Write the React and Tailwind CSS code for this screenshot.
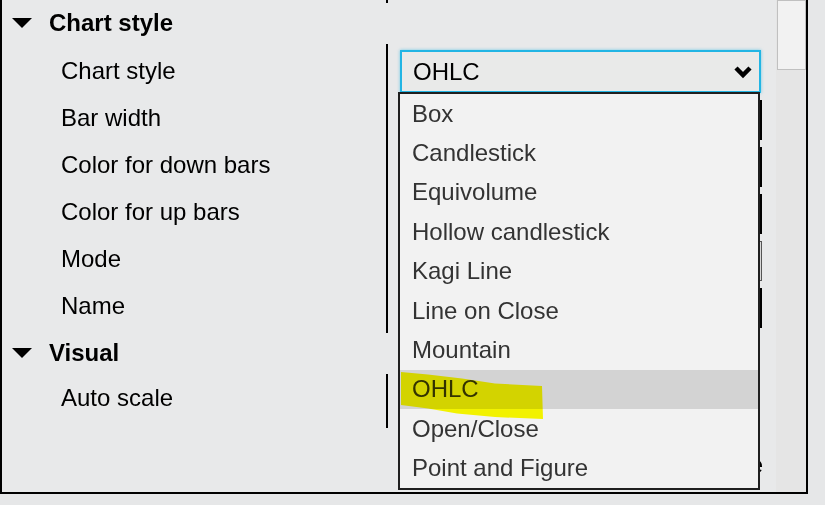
// Property grid with an open "Chart style" drop-down list
const chartRows = ["Chart style", "Bar width", "Color for down bars", "Color for up bars", "Mode", "Name"];

const options = [
  "Box",
  "Candlestick",
  "Equivolume",
  "Hollow candlestick",
  "Kagi Line",
  "Line on Close",
  "Mountain",
  "OHLC",
  "Open/Close",
  "Point and Figure",
];

function Triangle() {
  return (
    <svg width="20" height="10" viewBox="0 0 20 10" className="shrink-0">
      <polygon points="0,0 20,0 10,10" fill="#000" />
    </svg>
  );
}

function GroupHeader({ title }) {
  return (
    <div className="h-[41px] shrink-0 flex items-center pl-[10px] pb-[2px] gap-[17px]">
      <Triangle />
      <span className="text-[24px] font-bold text-black leading-none">{title}</span>
    </div>
  );
}

// Value cell behind the list: only its right edge shows past the drop-down
function ValueCell({ kind }) {
  if (kind === "select") {
    return (
      <div className="h-[43px] w-[361px] border-2 border-[#22b5e4] bg-[#e9eae9] shadow-[0_0_3px_rgba(34,181,228,0.6)] flex items-center justify-between pl-[11px] pr-[6px]">
        <span className="text-[24px] text-black leading-none">OHLC</span>
        <svg width="20" height="16" viewBox="0 0 20 16">
          <polyline points="3,4 10,11 17,4" fill="none" stroke="#000" strokeWidth="4.5" />
        </svg>
      </div>
    );
  }
  if (kind === "mode") {
    return <div className="h-[40px] w-[362px] border border-[#555] bg-[#d8d8d8]" />;
  }
  return <div className="h-[40px] w-[362px] border-r-4 border-black bg-[#f2f2f2]" />;
}

export default function App() {
  const kinds = ["select", "box", "box", "box", "mode", "box"];

  return (
    <div className="relative w-[825px] h-[505px] overflow-hidden bg-[#e6e7e8] font-['Liberation_Sans',Arial,sans-serif]">
      {/* Panel */}
      <div className="w-[808px] h-[494px] flex border-l-2 border-r-2 border-b-2 border-black bg-[#e8e9ea]">
        {/* Property rows */}
        <div className="w-[774px] flex flex-col">
          {/* tail of the previous group */}
          <div className="h-[3px] shrink-0 flex">
            <div className="w-[384px]" />
            <div className="flex-1 border-l-2 border-black" />
          </div>

          <GroupHeader title="Chart style" />

          <div className="flex shrink-0">
            <div className="w-[384px] pt-[3px] pb-[4px]">
              {chartRows.map((label) => (
                <div key={label} className="h-[47px] flex items-center pl-[59px] text-[24px] text-black">
                  {label}
                </div>
              ))}
            </div>
            <div className="flex-1 border-l-2 border-black pt-[3px] pb-[4px] pl-[12px]">
              {kinds.map((k, i) => (
                <div key={i} className={i === 0 ? "h-[47px] pt-[3px]" : "h-[47px] pt-[6px]"}>
                  <ValueCell kind={k} />
                </div>
              ))}
            </div>
          </div>

          <GroupHeader title="Visual" />

          <div className="flex shrink-0">
            <div className="w-[384px] pb-[7px]">
              <div className="h-[47px] flex items-center pl-[59px] text-[24px] text-black">Auto scale</div>
            </div>
            <div className="flex-1 border-l-2 border-black" />
          </div>

          {/* description text, mostly hidden by the list */}
          <div className="mt-[27px] h-[20px] shrink-0 flex justify-end pr-[13px] text-[24px] leading-[20px] text-black">
            Chart style
          </div>
        </div>

        {/* Scrollbar */}
        <div className="w-[30px] bg-[#e5e5e5]">
          <div className="ml-px w-[29px] h-[70px] border border-[#c0c0c0] bg-[#f2f2f2]" />
        </div>
      </div>

      {/* Open drop-down list */}
      <div className="absolute left-[398px] top-[92px] w-[362px] h-[398px] border-2 border-[#1f1f1f] bg-[#f2f2f2]">
        {options.map((opt) => (
          <div
            key={opt}
            className={
              opt === "OHLC"
                ? "h-[39.4px] flex items-center pl-[12px] text-[24px] text-[#333] bg-[#d3d3d3]"
                : "h-[39.4px] flex items-center pl-[12px] text-[24px] text-[#333]"
            }
          >
            {opt}
          </div>
        ))}
      </div>

      {/* Highlighter stroke over the selected item */}
      <svg
        className="absolute left-[400px] top-[371px] mix-blend-multiply"
        width="145"
        height="50"
        viewBox="0 0 145 50"
      >
        <polygon
          points="1,1 28,3.5 62,7.5 95,12.5 142,15 143,48 95,46 57,42.5 28,37.5 1,34"
          fill="#ffff00"
        />
      </svg>
    </div>
  );
}
